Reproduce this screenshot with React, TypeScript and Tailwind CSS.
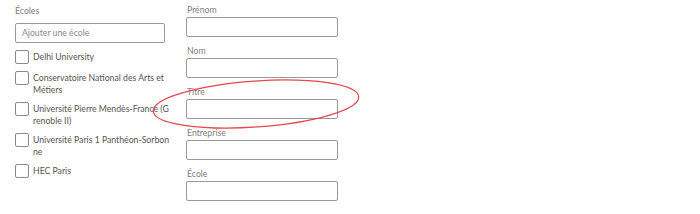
const schools = [
  ["Delhi University"],
  ["Conservatoire National des Arts et", "Métiers"],
  ["Université Pierre Mendès-France (G", "renoble II)"],
  ["Université Paris 1 Panthéon-Sorbon", "ne"],
  ["HEC Paris"],
];

const fields = ["Prénom", "Nom", "Titre", "Entreprise", "École"];

export default function App() {
  return (
    <div
      className="relative w-[700px] h-[214px] bg-white overflow-hidden text-[8.7px] leading-[12px]"
      style={{ fontFamily: 'Lato, "Noto Sans", sans-serif' }}
    >
      <div className="flex gap-[21px] pl-[15px]">
        {/* Écoles */}
        <div className="w-[150px] flex flex-col pt-[5px]">
          <span className="text-[#808080]">Écoles</span>
          <div className="mt-[6px] h-[20px] border border-[#9a9a9a] rounded-[2px] flex items-center px-[6px] text-[#8a8a8a]">
            Ajouter une école
          </div>
          <ul className="mt-[7px] flex flex-col gap-[7px]">
            {schools.map((lines) => (
              <li key={lines[0]} className="flex items-start gap-[4px] text-[#555]">
                <span className="w-[14px] h-[14px] shrink-0 border border-[#8a8a8a] rounded-[2px] bg-white" />
                <span className="whitespace-nowrap pt-[1px] -mb-[1px]">
                  {lines.map((l, i) => (
                    <span key={i} className="block">
                      {l}
                    </span>
                  ))}
                </span>
              </li>
            ))}
          </ul>
        </div>

        {/* Profil */}
        <div className="w-[152px] flex flex-col gap-[8px] pt-[4px]">
          {fields.map((f) => (
            <div key={f} className="flex flex-col gap-[1px]">
              <span className="pl-[1px] text-[#808080]">{f}</span>
              <div className="h-[20px] border border-[#9a9a9a] rounded-[2px] bg-white" />
            </div>
          ))}
        </div>
      </div>

      {/* annotation */}
      <svg
        className="absolute left-0 top-0 pointer-events-none"
        width="700"
        height="214"
        viewBox="0 0 700 214"
      >
        <ellipse
          cx="256"
          cy="104"
          rx="103"
          ry="23"
          transform="rotate(-4 256 104)"
          fill="none"
          stroke="#e5474c"
          strokeWidth="1.2"
        />
      </svg>
    </div>
  );
}
